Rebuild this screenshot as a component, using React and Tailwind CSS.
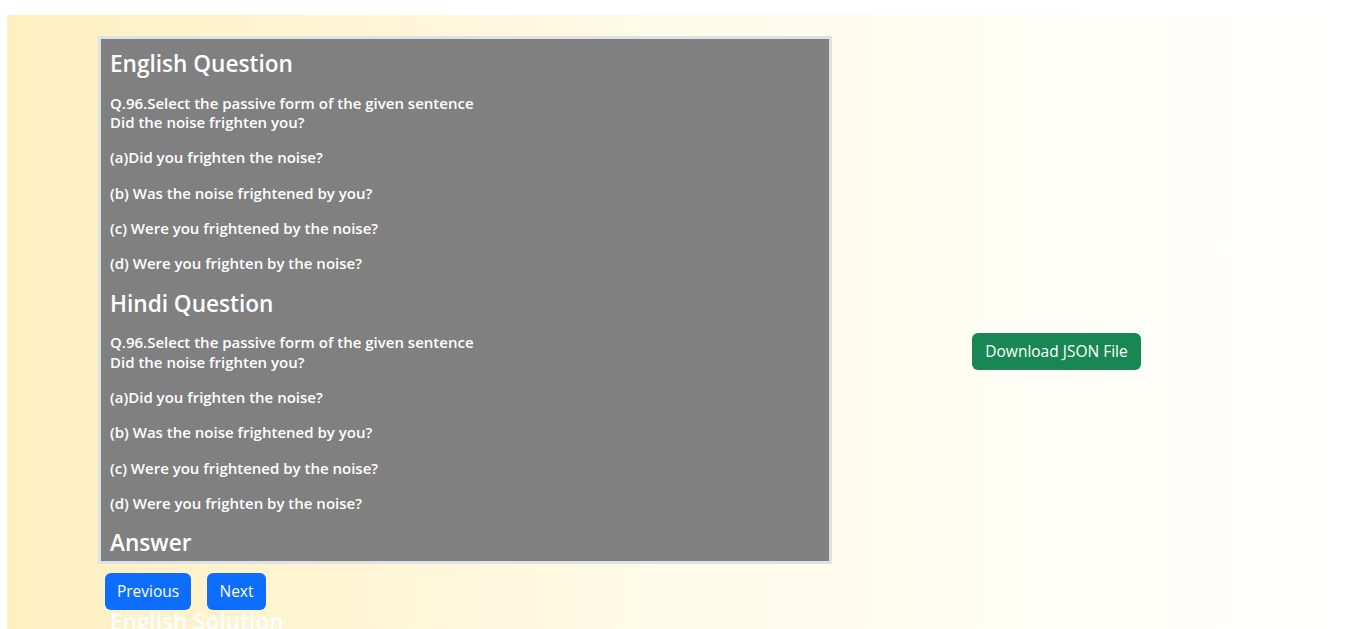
export default function App() {
  const options = [
    "(a)Did you frighten the noise?",
    "(b) Was the noise frightened by you?",
    "(c) Were you frightened by the noise?",
    "(d) Were you frighten by the noise?",
  ];

  const block = (title) => (
    <>
      <h4 className="text-[22.6px] leading-[28.8px] font-semibold mb-[15px]">{title}</h4>
      <p className="mb-[16px]">
        Q.96.Select the passive form of the given sentence
        <br />
        Did the noise frighten you?
      </p>
      {options.map((o) => (
        <p key={o} className="mb-[16px]">{o}</p>
      ))}
    </>
  );

  return (
    <div
      className="min-h-screen bg-white pt-[15px] pl-[7px] overflow-hidden"
      style={{ fontFamily: '"Open Sans", "Noto Sans", sans-serif' }}
    >
      <div className="min-h-[700px] bg-gradient-to-r from-[#ffefc0] via-[#fffbe9] to-[#ffffff] flex items-start">
        {/* question panel */}
        <div className="ml-[91px] mt-[21px] w-[734px]">
          <div className="h-[528px] border-[3px] border-[#dee2e6] bg-[#808080] text-white pt-[11px] px-[9px] text-[15px] leading-[19.3px] font-semibold">
            {block("English Question")}
            {block("Hindi Question")}
            <h4 className="text-[22.6px] leading-[28.8px] font-semibold mb-[15px]">Answer</h4>
            <p className="mb-[16px]">(b)</p>
            <h4 className="text-[22.6px] leading-[28.8px] font-semibold mb-[15px]">English Solution</h4>
          </div>
          <div className="flex gap-[16px] mt-[9px] ml-[7px]">
            <button className="relative bg-[#0d6efd] text-white text-[15.5px] leading-[25px] py-[6px] rounded-[6px] w-[86px] whitespace-nowrap">
              Previous
            </button>
            <button className="relative bg-[#0d6efd] text-white text-[15.5px] leading-[25px] py-[6px] rounded-[6px] w-[59px] whitespace-nowrap">
              Next
            </button>
          </div>
        </div>

        {/* download */}
        <div className="ml-[140px] mt-[318px]">
          <button className="bg-[#198754] text-white text-[15.5px] leading-[25px] py-[6px] rounded-[6px] w-[169px] whitespace-nowrap">
            Download JSON File
          </button>
        </div>
      </div>
    </div>
  );
}
